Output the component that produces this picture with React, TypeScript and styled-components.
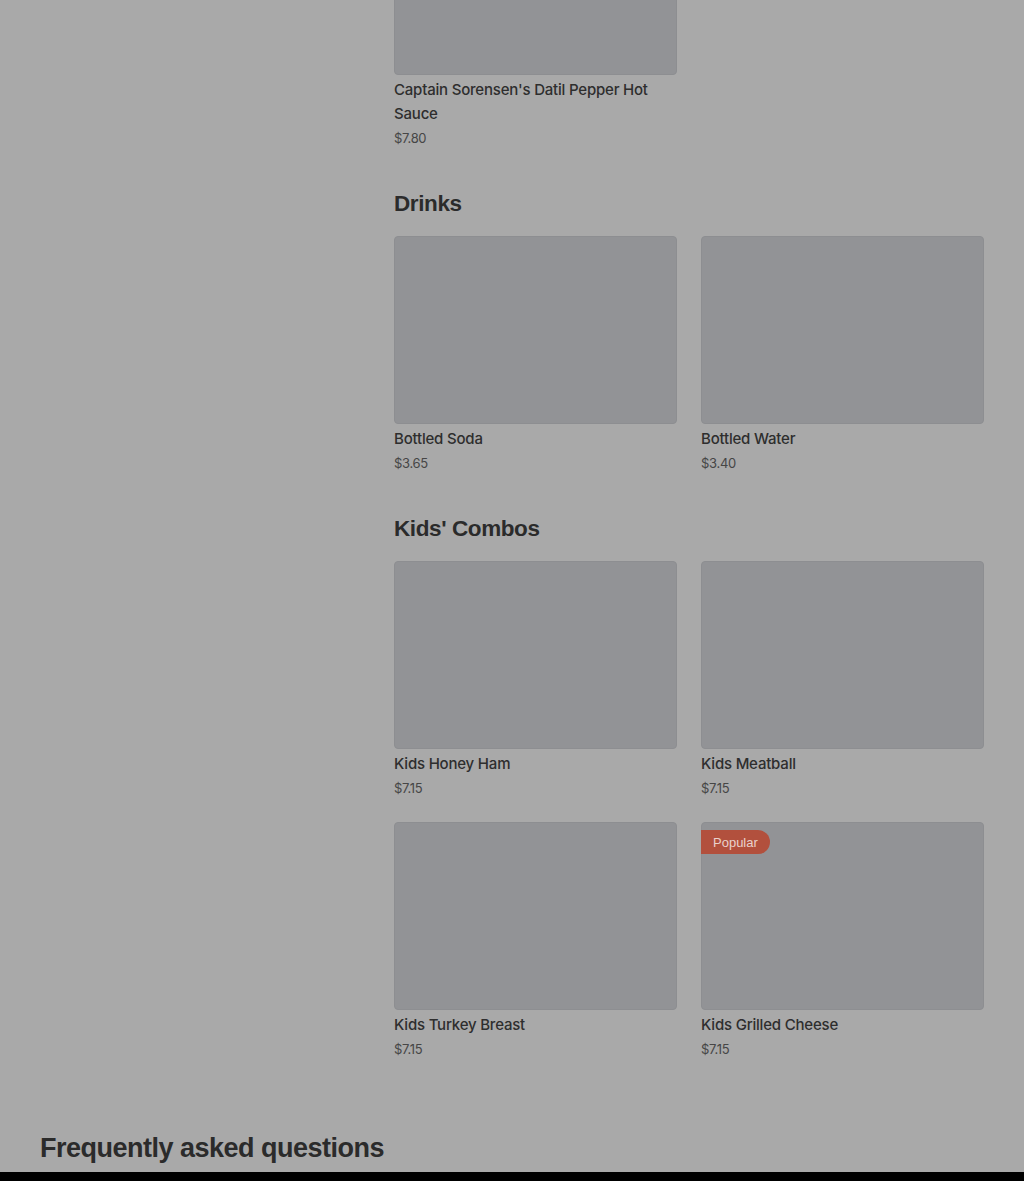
import React from "react";
import styled, { createGlobalStyle } from "styled-components";

const GlobalStyle = createGlobalStyle`
  html, body {
    margin: 0;
    padding: 0;
    background: #a9a9a9;
    overflow: hidden;
  }
  body {
    font-family: "Inter", "Liberation Sans", sans-serif;
    color: #2c2c2c;
  }
`;

const Page = styled.div`
  height: 1181px;
  display: flex;
  flex-direction: column;
  overflow: hidden;
`;

const Body = styled.div`
  display: grid;
  grid-template-columns: 394px 590px;
  margin-top: -113px;
`;

const Sidebar = styled.aside``;

const Menu = styled.main`
  display: flex;
  flex-direction: column;
`;

const Section = styled.section`
  display: flex;
  flex-direction: column;
  padding-bottom: 38px;
`;

const SectionTitle = styled.h2`
  margin: 0 0 16px;
  font-family: "Liberation Sans", Arial, sans-serif;
  font-size: 22.5px;
  line-height: 32px;
  font-weight: 700;
  letter-spacing: -0.4px;
  color: #2b2b2b;
`;

const Grid = styled.div`
  display: grid;
  grid-template-columns: repeat(2, 283px);
  column-gap: 24px;
  row-gap: 22px;
`;

const Card = styled.div`
  display: flex;
  flex-direction: column;
`;

const Thumb = styled.div`
  position: relative;
  height: 188px;
  background: #929396;
  border: 1px solid #8d8e91;
  border-radius: 4px;
  box-sizing: border-box;
`;

const Badge = styled.span`
  position: absolute;
  top: 7px;
  left: -1px;
  height: 24px;
  padding: 0 12px;
  display: flex;
  align-items: center;
  background: #b2503d;
  color: #ead2cc;
  font-family: "Liberation Sans", Arial, sans-serif;
  font-size: 13px;
  border-radius: 0 12px 12px 0;
`;

const ItemName = styled.div`
  margin-top: 3px;
  font-size: 15px;
  line-height: 24px;
  font-weight: 500;
  letter-spacing: -0.2px;
  color: #2e2e2e;
`;

const Price = styled.div`
  font-size: 13px;
  line-height: 24px;
  letter-spacing: -0.3px;
  color: #464646;
`;

const Faq = styled.h2`
  margin: 31px 0 0 40px;
  font-family: "Liberation Sans", Arial, sans-serif;
  font-size: 27px;
  line-height: 36px;
  font-weight: 700;
  letter-spacing: -0.5px;
  color: #2b2b2b;
`;

const Footer = styled.div`
  margin-top: 6px;
  flex: 1;
  background: #000;
`;

type Item = { name: string; price: string; popular?: boolean };

const sections: { title?: string; items: Item[] }[] = [
  { items: [{ name: "Captain Sorensen's Datil Pepper Hot Sauce", price: "$7.80" }] },
  {
    title: "Drinks",
    items: [
      { name: "Bottled Soda", price: "$3.65" },
      { name: "Bottled Water", price: "$3.40" },
    ],
  },
  {
    title: "Kids' Combos",
    items: [
      { name: "Kids Honey Ham", price: "$7.15" },
      { name: "Kids Meatball", price: "$7.15" },
      { name: "Kids Turkey Breast", price: "$7.15" },
      { name: "Kids Grilled Cheese", price: "$7.15", popular: true },
    ],
  },
];

const App = () => {
  return (
    <Page>
      <GlobalStyle />
      <Body>
        <Sidebar />
        <Menu>
          {sections.map((s, i) => (
            <Section key={i}>
              {s.title && <SectionTitle>{s.title}</SectionTitle>}
              <Grid>
                {s.items.map((item) => (
                  <Card key={item.name}>
                    <Thumb>{item.popular && <Badge>Popular</Badge>}</Thumb>
                    <ItemName>{item.name}</ItemName>
                    <Price>{item.price}</Price>
                  </Card>
                ))}
              </Grid>
            </Section>
          ))}
        </Menu>
      </Body>
      <Faq>Frequently asked questions</Faq>
      <Footer />
    </Page>
  );
};

export default App;
